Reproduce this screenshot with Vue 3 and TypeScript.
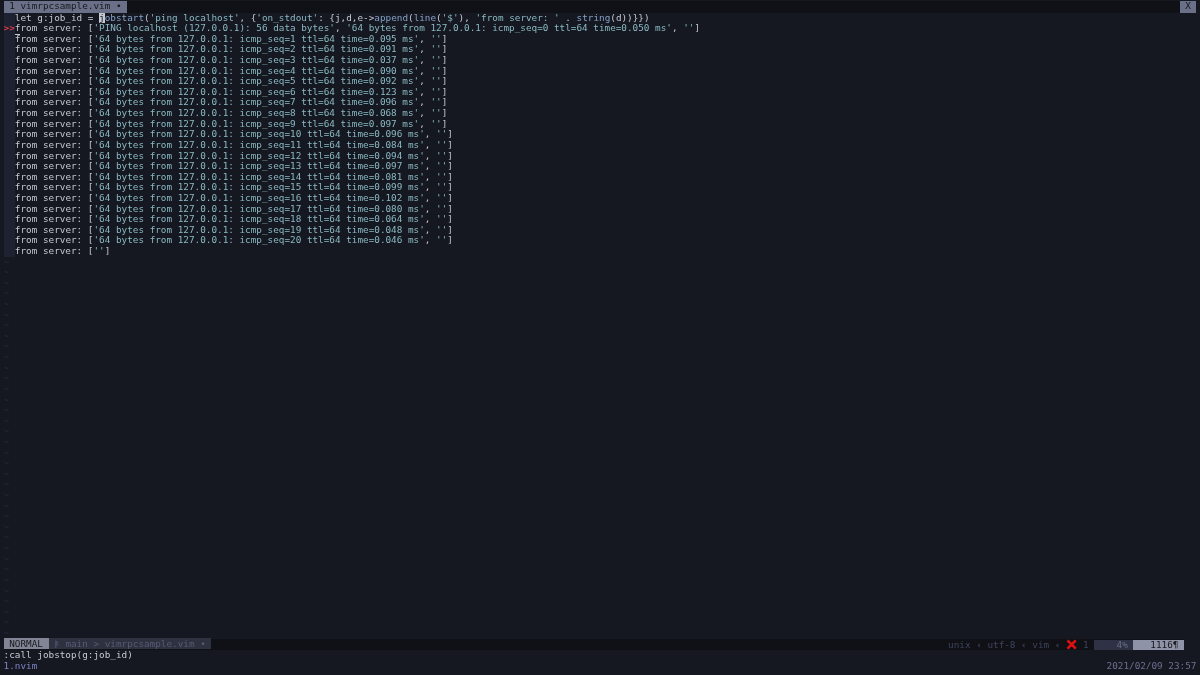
<script setup lang="ts">
const times = ['095','091','037','090','092','123','096','068','097','096','084','094','097','081','099','102','080','064','048','046']
const pings = times.map((t, i) => `'64 bytes from 127.0.0.1: icmp_seq=${i + 1} ttl=64 time=0.${t} ms'`)
const tildes = Array.from({ length: 36 }, (_, i) => i)
</script>

<template>
  <div class="screen">
    <div class="tabline">
      <span class="tab">&nbsp;1 vimrpcsample.vim •&nbsp;</span>
      <span class="close">&nbsp;X&nbsp;</span>
    </div>
    <div class="buffer">
      <div class="row">
        <span class="sign"></span>
        <span class="code">let g:job_id = <span class="cursor">j</span><span class="fn">obstart</span>(<span class="str">'ping localhost'</span>, {<span class="str">'on_stdout'</span>: {j,d,e-&gt;<span class="fn">append</span>(<span class="fn">line</span>(<span class="str">'$'</span>), <span class="str">'from server: '</span> . <span class="fn">string</span>(d))}})</span>
      </div>
      <div class="row">
        <span class="sign marker">&gt;&gt;</span>
        <span class="code">from server: [<span class="str">'PING localhost (127.0.0.1): 56 data bytes'</span>, <span class="str">'64 bytes from 127.0.0.1: icmp_seq=0 ttl=64 time=0.050 ms'</span>, <span class="str">''</span>]</span>
      </div>
      <div v-for="(p, i) in pings" :key="i" class="row">
        <span class="sign"></span>
        <span class="code"><span :class="{ overline: i === 0 }">f</span>rom server: [<span class="str">{{ p }}</span>, <span class="str">''</span>]</span>
      </div>
      <div class="row">
        <span class="sign"></span>
        <span class="code">from server: [<span class="str">''</span>]</span>
      </div>
      <div class="tildes">
        <div v-for="t in tildes" :key="t" class="row tilde">~</div>
      </div>
    </div>
    <div class="status">
      <div class="status-left">
        <span class="mode">&nbsp;NORMAL&nbsp;</span>
        <span class="branch">&nbsp;<svg class="git" viewBox="0 0 6 11" width="5.62" height="10.6"><path d="M2 1.5V9.5M2 2.5 4.6 4.2M2 5 4.6 6.7" /></svg> main &gt; vimrpcsample.vim •&nbsp;</span>
      </div>
      <div class="status-right">
        <span class="meta">unix <b>‹</b> utf-8 <b>‹</b> vim <b>‹</b>&nbsp;</span>
        <svg class="err" viewBox="0 0 12 12" width="11.24" height="11"><path d="M1.5 1.5 10.5 10.5M10.5 1.5 1.5 10.5" /></svg>
        <span class="meta">&nbsp;1&nbsp;</span>
        <span class="pct">&nbsp;&nbsp;&nbsp;&nbsp;4%&nbsp;</span>
        <span class="pos">&nbsp;&nbsp;&nbsp;1116¶&nbsp;</span>
      </div>
    </div>
    <div class="cmd">:call jobstop(g:job_id)</div>
    <div class="tmux">
      <span class="win">1.nvim</span>
      <span class="date">2021/02/09 23:57</span>
    </div>
  </div>
</template>

<style>
html, body { margin: 0; background: #161821; }
</style>

<style scoped>
.screen {
  width: 1200px;
  height: 675px;
  overflow: hidden;
  box-sizing: border-box;
  padding: 1px 3.6px 0;
  display: flex;
  flex-direction: column;
  background: #161821;
  color: #c6c8d1;
  font-family: "DejaVu Sans Mono", monospace;
  font-size: 9.33px;
  line-height: 10.62px;
  white-space: pre;
  filter: blur(0.42px);
}
.tabline {
  display: flex;
  justify-content: space-between;
  height: 11.6px;
  background: #0f1117;
  flex: none;
}
.tab { background: #6b7089; color: #17171b; }
.close { background: #6b7089; color: #17171b; }
.buffer { flex: 1; min-height: 0; overflow: hidden; }
.row { display: flex; height: 10.62px; }
.sign { width: 11.24px; flex: none; background: #1e2132; }
.marker { color: #e0394a; font-weight: bold; }
.str { color: #89b8c2; }
.fn { color: #84a0c6; }
.cursor { background: #c6c8d1; color: #161821; }
.overline { display: inline-block; box-shadow: inset 0 1px 0 #c6c8d1; }
.tilde { color: #242940; }
.status {
  flex: none;
  display: flex;
  justify-content: space-between;
  height: 11px;
  margin-right: 12.4px;
  background: #0f1117;
  color: #3e445e;
}
.mode { background: #818596; color: #17171b; }
.branch { background: #2e313f; color: #565b75; }
.git { stroke: #565b75; stroke-width: 1; fill: none; vertical-align: top; }
.status-right { display: flex; align-items: center; }
.err { stroke: #e01010; stroke-width: 3; fill: none; flex: none; }
.pct { background: #2e3244; color: #6b7089; }
.pos { background: #8f93a8; color: #17171b; }
.cmd { flex: none; height: 10.62px; }
.tmux {
  flex: none;
  height: 14px;
  display: flex;
  justify-content: space-between;
}
.win { color: #7f83c4; }
.date { color: #6b6f8f; }
</style>
